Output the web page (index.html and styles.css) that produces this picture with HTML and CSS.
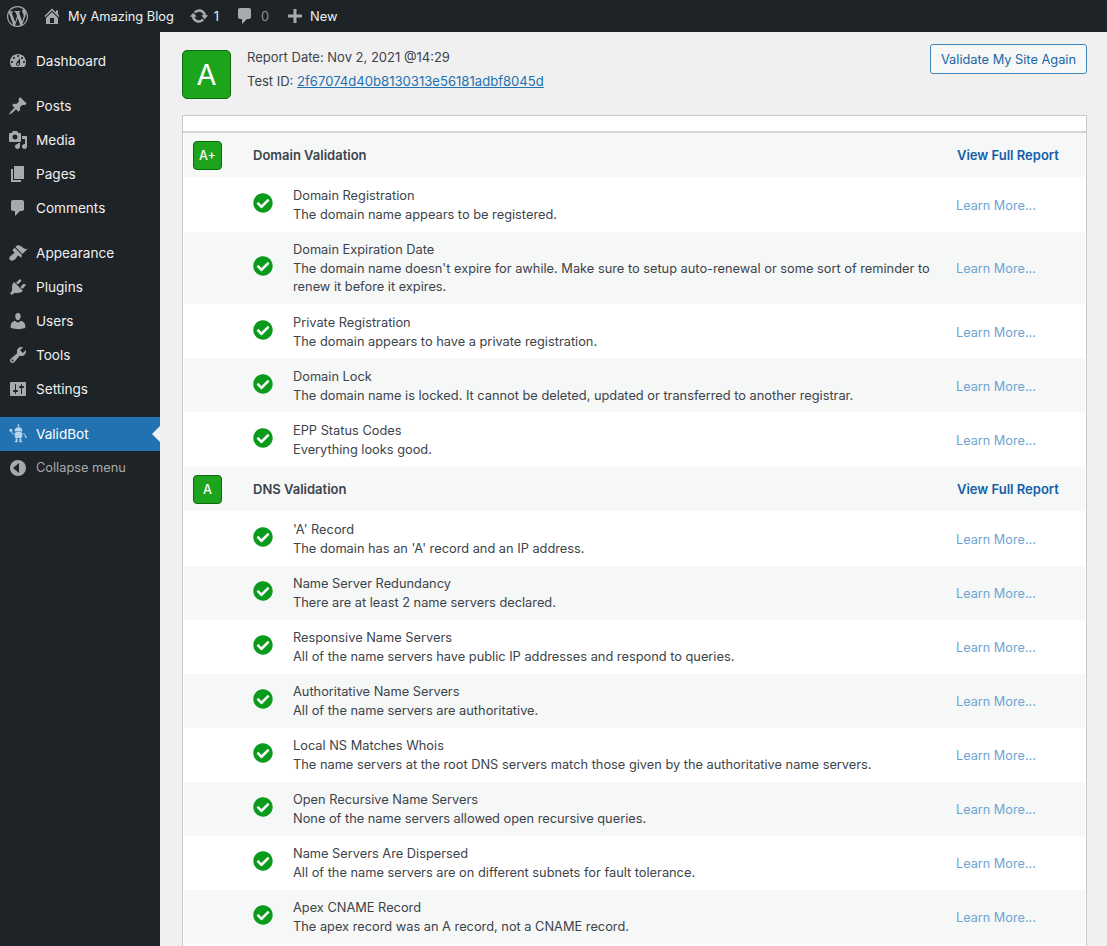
FILE: index.html
```html
<!DOCTYPE html>
<html lang="en">
<head>
<meta charset="utf-8">
<title>ValidBot</title>
<link rel="stylesheet" href="styles.css">
</head>
<body>
<svg class="defs" width="0" height="0" aria-hidden="true">
<symbol id="i-wp" viewBox="0 0 20 20"><path d="M20 10c0-5.51-4.49-10-10-10C4.48 0 0 4.49 0 10c0 5.52 4.48 10 10 10 5.51 0 10-4.48 10-10zM7.78 15.37L4.37 6.22c.55-.02 1.17-.08 1.17-.08.5-.06.44-1.13-.06-1.11 0 0-1.45.11-2.37.11-.18 0-.37 0-.58-.01C4.12 2.69 6.87 1.11 10 1.11c2.33 0 4.45.87 6.05 2.34-.68-.11-1.65.39-1.65 1.58 0 .74.45 1.36.9 2.1.35.61.55 1.36.55 2.46 0 1.49-1.4 5-1.4 5l-3.03-8.37c.54-.02.82-.17.82-.17.5-.05.44-1.25-.06-1.22 0 0-1.44.12-2.38.12-.87 0-2.33-.12-2.33-.12-.5-.03-.56 1.2-.06 1.22l.92.08 1.26 3.41zM17.41 10c.24-.64.74-1.87.43-4.25.7 1.29 1.05 2.71 1.05 4.25 0 3.29-1.73 6.24-4.4 7.78.97-2.59 1.94-5.2 2.92-7.78zM6.1 18.09C3.12 16.65 1.11 13.53 1.11 10c0-1.3.23-2.48.72-3.59C3.25 10.3 4.67 14.2 6.1 18.09zm4.03-6.63l2.58 6.98c-.86.29-1.76.45-2.71.45-.79 0-1.57-.11-2.29-.33.81-2.38 1.62-4.74 2.42-7.1z"/></symbol>
<symbol id="i-home" viewBox="0 0 20 20"><path d="M16 8.5l1.53 1.53-1.06 1.06L10 4.62l-6.47 6.47-1.06-1.06L10 2.5l4 4v-2h2v4zm-6-2.46l6 5.99V18H4v-5.97zM12 17v-5H8v5h4z"/></symbol>
<symbol id="i-update" viewBox="0 0 20 20"><path d="M10.2 3.28c3.53 0 6.43 2.61 6.92 6h2.08l-3.5 4-3.5-4h2.32c-.45-1.97-2.21-3.44-4.32-3.44-1.45 0-2.73.71-3.54 1.78L4.95 5.66C6.23 4.2 8.11 3.28 10.2 3.28zm-.4 13.44c-3.52 0-6.43-2.61-6.92-6H.8l3.5-4c1.17 1.33 2.33 2.67 3.5 4H5.48c.45 1.97 2.21 3.44 4.32 3.44 1.45 0 2.73-.71 3.54-1.78l1.71 1.95c-1.28 1.46-3.15 2.39-5.25 2.39z"/></symbol>
<symbol id="i-comment" viewBox="0 0 20 20"><path d="M5 2h9c1.1 0 2 .9 2 2v7c0 1.1-.9 2-2 2h-2l-5 5v-5H5c-1.1 0-2-.9-2-2V4c0-1.1.9-2 2-2z"/></symbol>
<symbol id="i-plus" viewBox="0 0 20 20"><path d="M17 8.5v3h-5.5V17h-3v-5.500H3v-3h5.500V3h3v5.500z"/></symbol>
<symbol id="i-dash" viewBox="0 0 20 20"><path d="M3.76 16h12.48c1.1-1.37 1.76-3.11 1.76-5 0-4.42-3.58-8-8-8s-8 3.58-8 8c0 1.89.66 3.63 1.76 5zM10 4c.55 0 1 .45 1 1s-.45 1-1 1-1-.45-1-1 .45-1 1-1zM6 6c.55 0 1 .45 1 1s-.45 1-1 1-1-.45-1-1 .45-1 1-1zm8 0c.55 0 1 .45 1 1s-.45 1-1 1-1-.45-1-1 .45-1 1-1zm-5.37 5.55L12 7v6c0 1.1-.9 2-2 2s-2-.9-2-2c0-.57.24-1.08.63-1.45zM4 10c.55 0 1 .45 1 1s-.45 1-1 1-1-.45-1-1 .45-1 1-1zm12 0c.55 0 1 .45 1 1s-.45 1-1 1-1-.45-1-1 .45-1 1-1zm-5 3c0-.55-.45-1-1-1s-1 .45-1 1 .45 1 1 1 1-.45 1-1z"/></symbol>
<symbol id="i-pin" viewBox="0 0 20 20"><path d="M10.44 3.02l1.82-1.82 6.36 6.35-1.83 1.82c-1.05-.68-2.48-.57-3.41.36l-.75.75c-.92.93-1.04 2.35-.35 3.41l-1.83 1.82-2.41-2.41-2.8 2.79c-.42.42-3.38 2.71-3.8 2.29s1.86-3.39 2.28-3.81l2.79-2.79L4.1 9.36l1.83-1.82c1.05.69 2.48.57 3.4-.36l.75-.75c.93-.92 1.05-2.35.36-3.41z"/></symbol>
<symbol id="i-media" viewBox="0 0 20 20"><path d="M13 11V4c0-.55-.45-1-1-1h-1.67L9 1H5L3.67 3H2c-.55 0-1 .45-1 1v7c0 .55.45 1 1 1h10c.55 0 1-.45 1-1zM7 4.500c1.38 0 2.500 1.120 2.500 2.500S8.380 9.500 7 9.500 4.500 8.380 4.500 7 5.620 4.500 7 4.500zM14 6h5v10.500c0 1.380-1.120 2.500-2.500 2.500S14 17.880 14 16.500s1.120-2.500 2.500-2.500c.17 0 .34.02.5.05V9h-3V6zm-4 8.050V13h2v3.500c0 1.380-1.120 2.500-2.500 2.500S7 17.880 7 16.500 8.120 14 9.500 14c.17 0 .34.02.5.05z"/></symbol>
<symbol id="i-page" viewBox="0 0 20 20"><path d="M6 15V2h10v13H6zm-1 1h8v2H3V5h2v11z"/></symbol>
<symbol id="i-brush" viewBox="0 0 20 20"><path d="M14.480 11.060L7.410 3.990l1.500-1.500c.5-.56 2.300-.47 3.510.32 1.210.8 1.430 1.280 2.910 2.100 1.180.64 2.450 1.260 4.450.85zm-.71.71L6.700 4.700 4.930 6.470c-.39.39-.39 1.020 0 1.410l1.060 1.060c.39.39.39 1.030 0 1.420-.6.6-1.430 1.110-2.210 1.690-.35.26-.7.53-1.010.84C1.430 13.230.78 15.820 2 17.040c1.220 1.210 3.800.57 5.160-.77.31-.31.58-.66.85-1.010.57-.78 1.080-1.610 1.690-2.210.39-.39 1.020-.39 1.410 0l1.060 1.060c.39.39 1.020.39 1.410 0z"/></symbol>
<symbol id="i-plug" viewBox="0 0 20 20"><path d="M13.110 4.360L9.870 7.600 8 5.730l3.240-3.240c.35-.34 1.050-.2 1.560.32.52.51.66 1.210.31 1.550zm-8 1.770l.91-1.120 9.010 9.010-1.190.84c-.71.71-2.630 1.160-3.820 1.160H6.140L4.900 17.260c-.59.59-1.540.59-2.120 0-.59-.58-.59-1.530 0-2.120l1.240-1.240v-3.880c0-1.130.4-3.190 1.090-3.890zm7.260 3.970l3.240-3.240c.34-.35 1.040-.21 1.550.31.52.51.66 1.210.31 1.550l-3.240 3.250z"/></symbol>
<symbol id="i-user" viewBox="0 0 20 20"><path d="M10 9.250c-2.270 0-2.730-3.440-2.730-3.440C7 4.020 7.820 2 9.970 2c2.160 0 2.980 2.020 2.710 3.810 0 0-.41 3.440-2.680 3.440zm0 2.570L12.720 10c2.390 0 4.520 2.330 4.520 4.530v2.490s-3.650 1.130-7.240 1.130c-3.650 0-7.240-1.130-7.240-1.130v-2.490c0-2.250 1.940-4.480 4.470-4.480z"/></symbol>
<symbol id="i-tool" viewBox="0 0 20 20"><path d="M16.680 9.770c-1.340 1.340-3.300 1.670-4.950.99l-5.410 6.520c-.99.99-2.590.99-3.580 0s-.99-2.590 0-3.570l6.520-5.420c-.68-1.650-.35-3.610.99-4.950 1.280-1.280 3.120-1.620 4.720-1.060l-2.890 2.890 2.820 2.820 2.860-2.870c.53 1.580.18 3.390-1.080 4.650zM3.810 16.210c.4.39 1.040.39 1.430 0 .4-.4.4-1.040 0-1.430-.39-.4-1.030-.4-1.430 0-.39.39-.39 1.030 0 1.430z"/></symbol>
<symbol id="i-set" viewBox="0 0 20 20"><path d="M18 16V4c0-.55-.45-1-1-1H3c-.55 0-1 .45-1 1v12c0 .55.45 1 1 1h14c.55 0 1-.45 1-1zM8 11h1c.55 0 1 .45 1 1s-.45 1-1 1H8v1.500c0 .28-.22.5-.5.5s-.5-.22-.5-.5V13H6c-.55 0-1-.45-1-1s.45-1 1-1h1V5.500c0-.28.22-.5.5-.5s.5.22.5.5V11zm5-2h-1c-.55 0-1-.45-1-1s.45-1 1-1h1V5.500c0-.28.22-.5.5-.5s.5.22.5.5V7h1c.55 0 1 .45 1 1s-.45 1-1 1h-1v5.500c0 .28-.22.5-.5.5s-.5-.22-.5-.5V9z"/></symbol>
<symbol id="i-bot" viewBox="0 0 20 20"><circle cx="10.500" cy="1.300" r="1"/><rect x="10.100" y="2" width=".8" height="1.500"/><path d="M6.800 7.500V6.200C6.800 4.300 8.300 3.200 10.500 3.200s3.700 1.100 3.700 3v1.300z"/><rect x="6.800" y="8" width="7.400" height="6" rx="1.500"/><rect x="7.700" y="14.500" width="1.900" height="2.800"/><rect x="11.400" y="14.500" width="1.900" height="2.800"/><rect x="6.700" y="17" width="2.900" height="1.200" rx=".5"/><rect x="11.400" y="17" width="2.900" height="1.200" rx=".5"/><path d="M6.500 10.200H4.300L2.900 7.300l.7-.3 1.200 2.400h1.700zM14.500 10.200h1.400l1.300 2.300.7-.4-1.500-2.700h-1.900z"/><circle cx="2.900" cy="6.200" r="1.500"/><circle cx="17.900" cy="13" r="1"/></symbol>
<symbol id="i-check" viewBox="0 0 512 512"><path d="M504 256c0 136.967-111.033 248-248 248S8 392.967 8 256 119.033 8 256 8s248 111.033 248 248zM227.314 387.314l184-184c6.248-6.248 6.248-16.379 0-22.627l-22.627-22.627c-6.248-6.249-16.379-6.249-22.628 0L216 308.118l-70.059-70.059c-6.248-6.248-16.379-6.248-22.628 0l-22.627 22.627c-6.248 6.248-6.248 16.379 0 22.627l104 104c6.249 6.249 16.379 6.249 22.628.001z"/></symbol>
</svg>

<header class="adminbar">
  <svg class="bar-wp"><use href="#i-wp"/></svg>
  <div class="bar-item bar-site"><svg class="bar-icon"><use href="#i-home"/></svg><span>My Amazing Blog</span></div>
  <div class="bar-item bar-up"><svg class="bar-icon"><use href="#i-update"/></svg><span>1</span></div>
  <div class="bar-item bar-com"><svg class="bar-icon"><use href="#i-comment"/></svg><span class="dim">0</span></div>
  <div class="bar-item bar-new"><svg class="bar-icon"><use href="#i-plus"/></svg><span>New</span></div>
</header>

<div class="shell">
  <nav class="sidebar">
    <a class="menu-item"><svg class="menu-icon"><use href="#i-dash"/></svg><span class="menu-label">Dashboard</span></a>
    <div class="sep"></div>
    <a class="menu-item"><svg class="menu-icon"><use href="#i-pin"/></svg><span class="menu-label">Posts</span></a>
    <a class="menu-item"><svg class="menu-icon"><use href="#i-media"/></svg><span class="menu-label">Media</span></a>
    <a class="menu-item"><svg class="menu-icon"><use href="#i-page"/></svg><span class="menu-label">Pages</span></a>
    <a class="menu-item"><svg class="menu-icon"><use href="#i-comment"/></svg><span class="menu-label">Comments</span></a>
    <div class="sep"></div>
    <a class="menu-item"><svg class="menu-icon"><use href="#i-brush"/></svg><span class="menu-label">Appearance</span></a>
    <a class="menu-item"><svg class="menu-icon"><use href="#i-plug"/></svg><span class="menu-label">Plugins</span></a>
    <a class="menu-item"><svg class="menu-icon"><use href="#i-user"/></svg><span class="menu-label">Users</span></a>
    <a class="menu-item"><svg class="menu-icon"><use href="#i-tool"/></svg><span class="menu-label">Tools</span></a>
    <a class="menu-item"><svg class="menu-icon"><use href="#i-set"/></svg><span class="menu-label">Settings</span></a>
    <div class="sep"></div>
    <a class="menu-item current"><svg class="menu-icon"><use href="#i-bot"/></svg><span class="menu-label">ValidBot</span></a>
    <a class="collapse"><span class="collapse-icon"></span><span class="menu-label">Collapse menu</span></a>
  </nav>

  <main class="content">
    <div class="summary">
      <div class="grade-big">A</div>
      <div class="meta">
        <div class="meta-line">Report Date: Nov 2, 2021 @14:29</div>
        <div class="meta-line">Test ID: <a class="test-id">2f67074d40b8130313e56181adbf8045d</a></div>
      </div>
      <a class="btn">Validate My Site Again</a>
    </div>

    <section class="report">
      <div class="report-top"></div>

      <div class="group-head"><div class="col-badge"><span class="grade-small">A+</span></div><h2 class="group-title">Domain Validation</h2><a class="full">View Full Report</a></div>
      <div class="row"><svg class="check"><use href="#i-check"/></svg><div class="text"><div>Domain Registration</div><div>The domain name appears to be registered.</div></div><a class="learn">Learn More...</a></div>
      <div class="row alt long"><svg class="check"><use href="#i-check"/></svg><div class="text"><div>Domain Expiration Date</div><div>The domain name doesn't expire for awhile. Make sure to setup auto-renewal or some sort of reminder to renew it before it expires.</div></div><a class="learn">Learn More...</a></div>
      <div class="row upper"><svg class="check"><use href="#i-check"/></svg><div class="text"><div>Private Registration</div><div>The domain appears to have a private registration.</div></div><a class="learn">Learn More...</a></div>
      <div class="row alt upper"><svg class="check"><use href="#i-check"/></svg><div class="text"><div>Domain Lock</div><div>The domain name is locked. It cannot be deleted, updated or transferred to another registrar.</div></div><a class="learn">Learn More...</a></div>
      <div class="row"><svg class="check"><use href="#i-check"/></svg><div class="text"><div>EPP Status Codes</div><div>Everything looks good.</div></div><a class="learn">Learn More...</a></div>

      <div class="group-head"><div class="col-badge"><span class="grade-small">A</span></div><h2 class="group-title">DNS Validation</h2><a class="full">View Full Report</a></div>
      <div class="row"><svg class="check"><use href="#i-check"/></svg><div class="text"><div>'A' Record</div><div>The domain has an 'A' record and an IP address.</div></div><a class="learn">Learn More...</a></div>
      <div class="row alt lower"><svg class="check"><use href="#i-check"/></svg><div class="text"><div>Name Server Redundancy</div><div>There are at least 2 name servers declared.</div></div><a class="learn">Learn More...</a></div>
      <div class="row lower"><svg class="check"><use href="#i-check"/></svg><div class="text"><div>Responsive Name Servers</div><div>All of the name servers have public IP addresses and respond to queries.</div></div><a class="learn">Learn More...</a></div>
      <div class="row alt lower"><svg class="check"><use href="#i-check"/></svg><div class="text"><div>Authoritative Name Servers</div><div>All of the name servers are authoritative.</div></div><a class="learn">Learn More...</a></div>
      <div class="row lower"><svg class="check"><use href="#i-check"/></svg><div class="text"><div>Local NS Matches Whois</div><div>The name servers at the root DNS servers match those given by the authoritative name servers.</div></div><a class="learn">Learn More...</a></div>
      <div class="row alt lower"><svg class="check"><use href="#i-check"/></svg><div class="text"><div>Open Recursive Name Servers</div><div>None of the name servers allowed open recursive queries.</div></div><a class="learn">Learn More...</a></div>
      <div class="row lower"><svg class="check"><use href="#i-check"/></svg><div class="text"><div>Name Servers Are Dispersed</div><div>All of the name servers are on different subnets for fault tolerance.</div></div><a class="learn">Learn More...</a></div>
      <div class="row alt lower"><svg class="check"><use href="#i-check"/></svg><div class="text"><div>Apex CNAME Record</div><div>The apex record was an A record, not a CNAME record.</div></div><a class="learn">Learn More...</a></div>
    </section>
  </main>
</div>
</body>
</html>
```

FILE: styles.css
```css
* { box-sizing: border-box; }
html, body { margin: 0; height: 946px; overflow: hidden; }
body { background: #f0f0f1; color: #3c434a; font-family: Inter, "Liberation Sans", sans-serif; font-size: 13px; }
.defs { position: absolute; }
svg { fill: currentColor; display: block; flex: none; }

.adminbar { height: 32px; background: #1d2327; color: #f0f0f1; display: flex; align-items: center; font-size: 12.8px; }
.bar-wp { width: 21px; height: 21px; margin-left: 7px; color: #a7aaad; }
.bar-item { display: flex; align-items: center; }
.bar-icon { width: 20px; height: 20px; color: #a7aaad; }
.bar-site { margin-left: 14px; gap: 6px; }
.bar-up { margin-left: 15px; gap: 5px; }
.bar-com { margin-left: 16px; gap: 6px; }
.bar-new { margin-left: 16px; gap: 5px; }
.dim { color: #8c8f94; }

.shell { display: flex; height: 914px; }
.sidebar { width: 160px; flex: none; background: #1d2327; padding-top: 12px; }
.menu-item { height: 34px; display: flex; align-items: center; color: #f0f0f1; font-size: 13.6px; padding-left: 8px; gap: 8px; position: relative; }
.menu-icon { width: 20px; height: 20px; color: #a7aaad; }
.sep { height: 11px; }
.current { background: #2271b1; color: #fff; }
.current .menu-icon { color: #b5d6ee; }
.current::after { content: ""; position: absolute; right: 0; top: 9px; border: 8px solid transparent; border-right-color: #f0f0f1; border-left-width: 0; }
.collapse { height: 33px; display: flex; align-items: center; color: #a7aaad; font-size: 12.8px; padding-left: 10px; gap: 10px; }
.collapse-icon { width: 16px; height: 16px; border-radius: 50%; background: #a7aaad; position: relative; flex: none; }
.collapse-icon::after { content: ""; position: absolute; left: 3px; top: 3px; border: 5px solid transparent; border-right: 6px solid #1d2327; border-left-width: 0; }

.content { flex: 1; min-width: 0; padding: 13px 20px 0 22px; display: flex; flex-direction: column; }
.summary { display: flex; align-items: flex-start; height: 70px; flex: none; }
.grade-big { width: 49px; height: 49px; margin-top: 5px; background: #1ca41c; border: 1.5px solid #0c6b0c; border-radius: 5px; color: #fff; font-size: 29px; display: flex; align-items: center; justify-content: center; }
.meta { margin-left: 16px; flex: 1; }
.meta-line { font-size: 13px; line-height: 24px; height: 24px; }
.test-id { color: #2271b1; text-decoration: underline; font-size: 13.1px; }
.btn { height: 30px; padding: 0 10px; margin-top: -1px; border: 1px solid #3f86bd; border-radius: 3px; background: #f6f7f7; color: #1b66a6; font-size: 12.8px; display: flex; align-items: center; }

.report { background: #fff; border: 1px solid #c8c9cb; border-bottom: 0; padding: 0 1px; flex: 1; min-height: 0; overflow: hidden; }
.report-top { height: 15px; margin: 0 -1px; border-bottom: 2px solid #d4d4d6; box-sizing: content-box; }
.group-head { height: 44px; background: #f6f7f7; display: flex; align-items: center; }
.col-badge { width: 69px; padding-left: 9px; flex: none; }
.grade-small { width: 29px; height: 29px; background: #1ca41c; border: 1px solid #0c6b0c; border-radius: 4px; color: #fff; font-size: 12.5px; font-weight: 500; display: flex; align-items: center; justify-content: center; }
.group-title { margin: 0; font-size: 13px; font-weight: 600; color: #3c434a; flex: 1; }
.full { width: 128px; flex: none; font-size: 13px; font-weight: 600; color: #1260a8; }

.row { display: flex; align-items: center; padding: 10px 0 8px 69px; background: #fff; }
.row.upper { padding-bottom: 7px; }
.row.lower { padding-top: 9px; }
.row.long { padding-top: 9px; padding-bottom: 7.5px; }
.alt { background: #f6f7f7; }
.check { width: 20px; height: 20px; color: #0b9b1c; margin: 0 20px 5px 0; }
.text { flex: 1; line-height: 18.5px; font-size: 12.8px; min-width: 0; }
.learn { width: 129px; flex: none; font-size: 12.7px; color: #6fa5d4; }
```
